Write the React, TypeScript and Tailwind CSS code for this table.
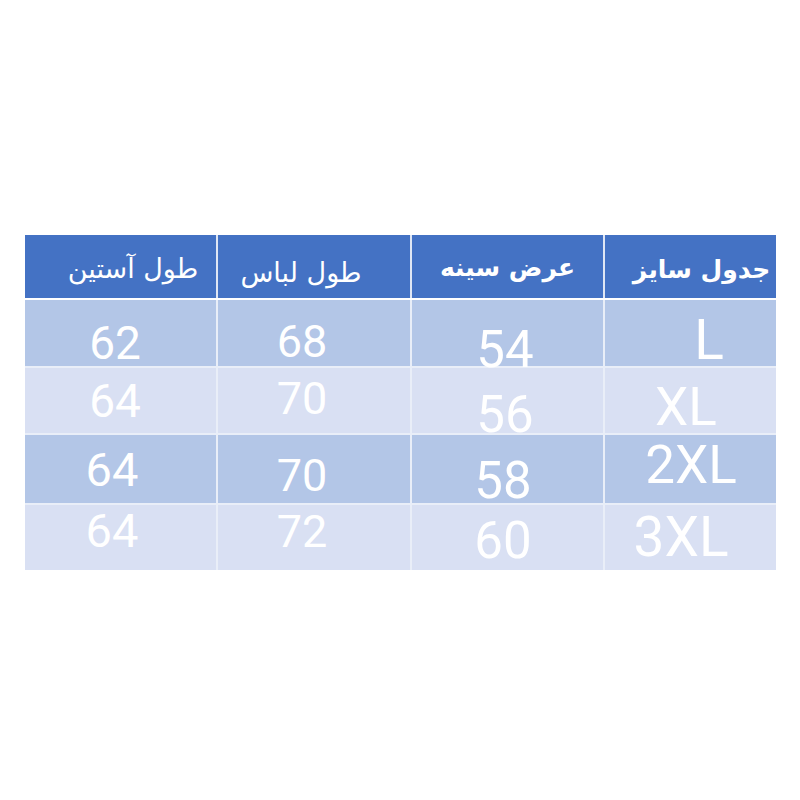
const header = [
  { label: "طول آستین", cls: "pl-[25px] pt-[4px] font-normal text-[27px]" },
  { label: "طول لباس", cls: "pr-[26px] pt-[12px] font-normal text-[27px]" },
  { label: "عرض سینه", cls: "pt-[2px] font-bold text-[25px]" },
  { label: "جدول سایز", cls: "pl-[22px] pt-[6px] font-bold text-[25px]" },
];

type Cell = { v: string; cls: string };

const rows: { bg: string; h: string; cells: Cell[] }[] = [
  {
    bg: "bg-[#b3c6e7]",
    h: "h-[68px]",
    cells: [
      { v: "62", cls: "pr-[11px] pt-[10px] text-[46px]" },
      { v: "68", cls: "pr-[24px] pt-[8px] text-[45px]" },
      { v: "54", cls: "pr-[5px] pt-[24px] text-[51px]" },
      { v: "L", cls: "pl-[37px] pt-[6px] text-[55px]" },
    ],
  },
  {
    bg: "bg-[#d9e0f3]",
    h: "h-[67px]",
    cells: [
      { v: "64", cls: "pr-[11px] pb-[7px] text-[46px]" },
      { v: "70", cls: "pr-[24px] pb-[11px] text-[45px]" },
      { v: "56", cls: "pr-[5px] pt-[21px] text-[51px]" },
      { v: "XL", cls: "pr-[9px] pt-[7px] text-[53px]" },
    ],
  },
  {
    bg: "bg-[#b3c6e7]",
    h: "h-[70px]",
    cells: [
      { v: "64", cls: "pr-[17px] pb-[2px] text-[47px]" },
      { v: "70", cls: "pr-[24px] pt-[10px] text-[45px]" },
      { v: "58", cls: "pr-[9px] pt-[20px] text-[51px]" },
      { v: "2XL", cls: "pl-[1px] pb-[10px] text-[53px]" },
    ],
  },
  {
    bg: "bg-[#d9e0f3]",
    h: "h-[65px]",
    cells: [
      { v: "64", cls: "pr-[17px] pb-[15px] text-[47px]" },
      { v: "72", cls: "pr-[24px] pb-[13px] text-[45px]" },
      { v: "60", cls: "pr-[9px] pt-[5px] text-[51px]" },
      { v: "3XL", cls: "pr-[19px] pb-[1px] text-[55px]" },
    ],
  },
];

const cols = "grid grid-cols-[193px_194px_193px_171px]";

export default function App() {
  return (
    <div className="w-[800px] h-[800px] bg-white pt-[235px] pl-[25px]">
      <div className="w-[751px]">
        <div className={`${cols} h-[65px] bg-[#4472c4] border-b-2 border-white`}>
          {header.map((h, i) => (
            <div
              key={i}
              dir="rtl"
              className={`flex items-center justify-center text-white leading-none font-['DejaVu_Sans',sans-serif] ${i < 3 ? "border-r-2 border-[#dfe6f4]" : ""} ${h.cls}`}
            >
              {h.label}
            </div>
          ))}
        </div>
        {rows.map((r, ri) => (
          <div key={ri} className={`${cols} ${r.h} ${r.bg} ${ri < 3 ? "border-b-2 border-[#e9eef8]" : ""}`}>
            {r.cells.map((c, ci) => (
              <div
                key={ci}
                className={`flex items-center justify-center text-white leading-none font-['Roboto',sans-serif] ${ci < 3 ? "border-r-2 border-[#e9eef8]" : ""} ${c.cls}`}
              >
                {c.v}
              </div>
            ))}
          </div>
        ))}
      </div>
    </div>
  );
}
